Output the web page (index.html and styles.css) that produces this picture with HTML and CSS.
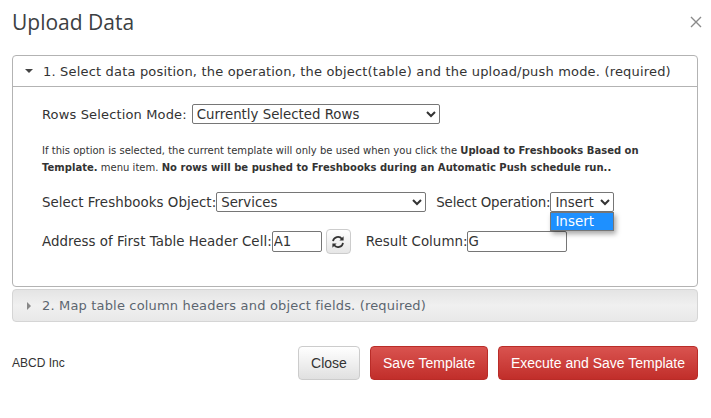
FILE: index.html
```html
<!DOCTYPE html>
<html lang="en">
<head>
  <meta charset="UTF-8">
  <title>Upload Data</title>
  <link rel="stylesheet" href="styles.css">
</head>
<body>
  <div class="modal">
    <header class="modal-head">
      <h1>Upload Data</h1>
      <svg class="close-x" width="12" height="12" viewBox="0 0 12 12"><path d="M1 1l10 10M11 1L1 11" stroke="#8a8a8a" stroke-width="1.4" fill="none"/></svg>
    </header>

    <section class="panel">
      <div class="panel-head">
        <span class="arrow-down"></span>
        <span>1. Select data position, the operation, the object(table) and the upload/push mode. (required)</span>
      </div>
      <div class="panel-body">
        <div class="row row-mode">
          <label>Rows Selection Mode:</label>
          <select class="sel sel-mode"><option>Currently Selected Rows</option></select>
        </div>
        <p class="note">If this option is selected, the current template will only be used when you click the <b>Upload to Freshbooks Based on Template.</b> menu item. <b>No rows will be pushed to Freshbooks during an Automatic Push schedule run..</b></p>
        <div class="row row-object">
          <label>Select Freshbooks Object:</label>
          <select class="sel sel-object"><option>Services</option></select>
          <label class="gap-label">Select Operation:</label>
          <div class="op-wrap">
            <select class="sel sel-op"><option>Insert</option></select>
            <div class="op-menu">Insert</div>
          </div>
        </div>
        <div class="row row-address">
          <label>Address of First Table Header Cell:</label>
          <input class="txt txt-addr" type="text" value="A1">
          <button class="refresh" type="button">
            <svg width="14" height="14" viewBox="0 0 14 14"><path d="M2 6.2A5 5 0 0 1 11 4M12 7.8A5 5 0 0 1 3 10" stroke="#333" stroke-width="1.7" fill="none"/><path d="M12.6 1.2v4.2H8.4zM1.4 12.8V8.6h4.2z" fill="#333"/></svg>
          </button>
          <label class="result-label">Result Column:</label>
          <input class="txt txt-result" type="text" value="G">
        </div>
      </div>
    </section>

    <section class="panel panel-closed">
      <span class="arrow-right"></span>
      <span>2. Map table column headers and object fields. (required)</span>
    </section>

    <footer class="modal-foot">
      <span class="company">ABCD Inc</span>
      <button class="btn btn-plain" type="button">Close</button>
      <button class="btn btn-red btn-save" type="button">Save Template</button>
      <button class="btn btn-red" type="button">Execute and Save Template</button>
    </footer>
  </div>
</body>
</html>
```

FILE: styles.css
```css
* {
  box-sizing: border-box;
}
body {
  margin: 0;
  background: #fff;
  color: #333;
  font-family: "DejaVu Sans", Verdana, sans-serif;
  font-size: 13px;
}
.modal {
  width: 711px;
  padding: 0 13px 0 12px;
}
.modal-head {
  height: 55px;
  display: flex;
  justify-content: space-between;
  align-items: flex-start;
}
.modal-head h1 {
  margin: 8px 0 0;
  font-family: "Open Sans", sans-serif;
  font-size: 21px;
  line-height: 28px;
  font-weight: 400;
  color: #3c4043;
}
.close-x {
  margin: 16px -4px 0 0;
}
.panel {
  border: 1px solid #b3b3b3;
  border-radius: 4px;
}
.panel-head {
  height: 31px;
  display: flex;
  align-items: center;
  padding-left: 12px;
  border-bottom: 1px solid #b3b3b3;
  font-size: 13px;
  letter-spacing: 0.18px;
}
.arrow-down {
  width: 0;
  height: 0;
  margin-right: 10px;
  border-left: 4px solid transparent;
  border-right: 4px solid transparent;
  border-top: 4px solid #444;
}
.arrow-right {
  width: 0;
  height: 0;
  margin-left: 1px;
  margin-right: 11px;
  border-top: 4px solid transparent;
  border-bottom: 4px solid transparent;
  border-left: 4px solid #888;
}
.panel-body {
  height: 199px;
  padding: 17px 29px 0;
}
.row {
  display: flex;
  align-items: center;
}
.sel {
  height: 20px;
  padding: 0;
  font-family: inherit;
  font-size: 13.33px;
  color: #333;
  background: #fff;
  border: 1px solid #767676;
  border-radius: 2px;
}
.row-mode label {
  margin-right: 5px;
  letter-spacing: 0.15px;
}
.sel-mode {
  width: 248px;
}
.note {
  margin: 18px 0 0;
  font-size: 10px;
  line-height: 17px;
  letter-spacing: 0.02px;
}
.row-object {
  margin-top: 16px;
  font-size: 13.4px;
  letter-spacing: 0.04px;
}
.sel-object {
  width: 210px;
}
.gap-label {
  margin-left: 10px;
  letter-spacing: -0.15px;
}
.op-wrap {
  position: relative;
}
.sel-op {
  width: 64px;
  display: block;
}
.op-menu {
  position: absolute;
  left: 0;
  top: 20px;
  width: 64px;
  height: 19px;
  padding-left: 4px;
  line-height: 17px;
  background: #1e90ff;
  color: #fff;
  border: 1px solid #767676;
  box-shadow: 2px 3px 5px rgba(0, 0, 0, 0.35);
}
.row-address {
  margin-top: 17px;
  font-size: 13.4px;
  letter-spacing: 0.03px;
}
.txt {
  height: 21px;
  padding: 0 1px;
  font-family: inherit;
  font-size: 13.33px;
  color: #333;
  border: 1px solid #767676;
  border-radius: 2px;
}
.txt-addr {
  width: 50px;
}
.refresh {
  width: 25px;
  height: 25px;
  margin-left: 4px;
  padding: 0;
  display: flex;
  align-items: center;
  justify-content: center;
  background: linear-gradient(#fff, #e6e6e6);
  border: 1px solid #ccc;
  border-radius: 4px;
}
.result-label {
  margin-left: 15px;
  margin-right: -1px;
}
.txt-result {
  width: 100px;
}
.panel-closed {
  height: 33px;
  margin-top: 2px;
  display: flex;
  align-items: center;
  padding-left: 13px;
  color: #5c6670;
  letter-spacing: 0.17px;
  background: linear-gradient(#e4e4e4, #f0f0f0 50%, #e8e8e8);
  border-color: #d5d5d5;
}
.modal-foot {
  display: flex;
  align-items: center;
  margin-top: 24px;
}
.company {
  margin-right: auto;
  font-family: "Liberation Sans", Arial, sans-serif;
  font-size: 12px;
}
.btn {
  height: 34px;
  padding: 0 12px;
  font-family: "Liberation Sans", Arial, sans-serif;
  font-size: 14px;
  line-height: 30px;
  white-space: nowrap;
  border-radius: 4px;
}
.btn-plain {
  width: 62px;
  color: #333;
  background: linear-gradient(#fff, #e0e0e0);
  border: 1px solid #ccc;
}
.btn-red {
  color: #fff;
  background: linear-gradient(#d9534f, #c12e2a);
  border: 1px solid #b92c28;
}
.btn-save {
  width: 118px;
  margin: 0 10px;
}
```
